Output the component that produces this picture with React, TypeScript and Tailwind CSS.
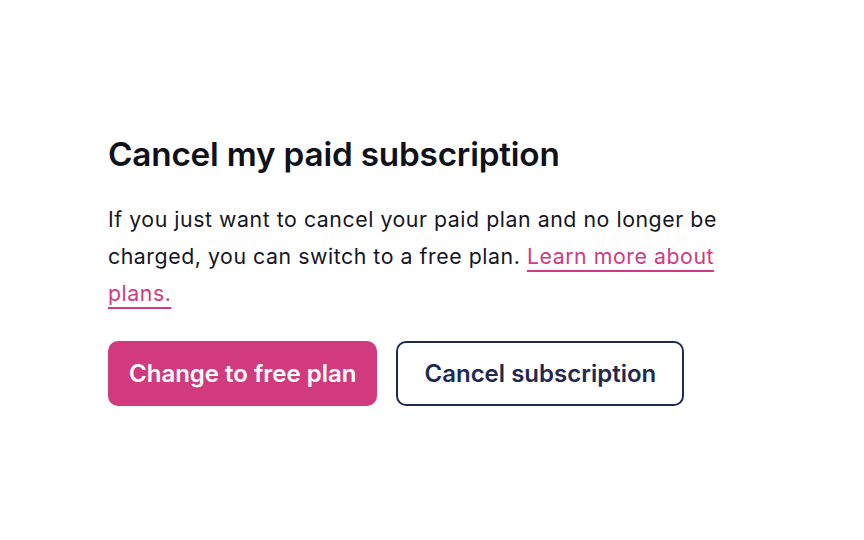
export default function App() {
  return (
    <div
      className="min-h-screen bg-white pl-[108px] pt-[133px]"
      style={{ fontFamily: 'Inter, "Noto Sans", sans-serif' }}
    >
      <div className="w-[620px]">
        <h1 className="text-[33.3px] font-semibold leading-[42px] text-[#10111a] tracking-[-0.2px]">
          Cancel my paid subscription
        </h1>
        <p className="mt-[26px] text-[21.3px] leading-[37px] tracking-[0.55px] text-[#15161f]">
          If you just want to cancel your paid plan and no longer be charged, you can switch to a
          free plan.{' '}
          <a href="#" className="text-[#d13a7f] underline underline-offset-[6px] decoration-[1.5px]">
            Learn more about plans.
          </a>
        </p>
        <div className="mt-[29px] flex gap-[19px]">
          <button className="h-[65px] rounded-[10px] bg-[#d13a7f] px-[21px] text-[24px] font-semibold text-white">
            Change to free plan
          </button>
          <button className="h-[65px] rounded-[10px] border-[2.5px] border-[#1e2a52] bg-white px-[26px] text-[24px] font-semibold text-[#1e2a52]">
            Cancel subscription
          </button>
        </div>
      </div>
    </div>
  );
}
